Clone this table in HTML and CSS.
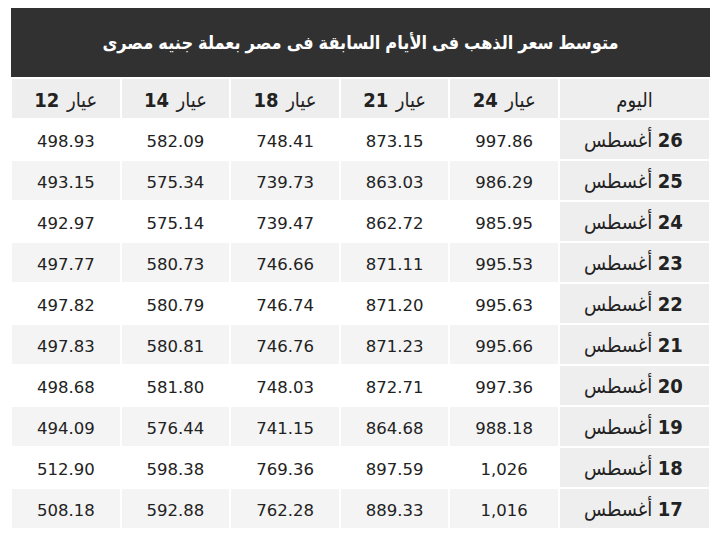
FILE: index.html
```html
<!DOCTYPE html>
<html lang="ar">
<head>
<meta charset="utf-8">
<link rel="stylesheet" href="styles.css">
</head>
<body>
<div class="wrap" dir="rtl">
  <div class="title">متوسط سعر الذهب فى الأيام السابقة فى مصر بعملة جنيه مصرى</div>
  <table class="prices">
    <colgroup><col class="c-day"><col><col><col><col><col></colgroup>
    <thead>
      <tr><th class="day-h">اليوم</th><th>عيار <b>24</b></th><th>عيار <b>21</b></th><th>عيار <b>18</b></th><th>عيار <b>14</b></th><th>عيار <b>12</b></th></tr>
    </thead>
    <tbody>
      <tr><td class="day"><b>26</b> أغسطس</td><td>997.86</td><td>873.15</td><td>748.41</td><td>582.09</td><td>498.93</td></tr>
      <tr><td class="day"><b>25</b> أغسطس</td><td>986.29</td><td>863.03</td><td>739.73</td><td>575.34</td><td>493.15</td></tr>
      <tr><td class="day"><b>24</b> أغسطس</td><td>985.95</td><td>862.72</td><td>739.47</td><td>575.14</td><td>492.97</td></tr>
      <tr><td class="day"><b>23</b> أغسطس</td><td>995.53</td><td>871.11</td><td>746.66</td><td>580.73</td><td>497.77</td></tr>
      <tr><td class="day"><b>22</b> أغسطس</td><td>995.63</td><td>871.20</td><td>746.74</td><td>580.79</td><td>497.82</td></tr>
      <tr><td class="day"><b>21</b> أغسطس</td><td>995.66</td><td>871.23</td><td>746.76</td><td>580.81</td><td>497.83</td></tr>
      <tr><td class="day"><b>20</b> أغسطس</td><td>997.36</td><td>872.71</td><td>748.03</td><td>581.80</td><td>498.68</td></tr>
      <tr><td class="day"><b>19</b> أغسطس</td><td>988.18</td><td>864.68</td><td>741.15</td><td>576.44</td><td>494.09</td></tr>
      <tr><td class="day"><b>18</b> أغسطس</td><td>1,026</td><td>897.59</td><td>769.36</td><td>598.38</td><td>512.90</td></tr>
      <tr><td class="day"><b>17</b> أغسطس</td><td>1,016</td><td>889.33</td><td>762.28</td><td>592.88</td><td>508.18</td></tr>
    </tbody>
  </table>
</div>
</body>
</html>
```

FILE: styles.css
```css
html, body {
  margin: 0;
  padding: 0;
  background: #fff;
}
.wrap {
  width: 699px;
  margin: 8px 0 0 11px;
}
.title {
  background: #313131;
  color: #fff;
  height: 69px;
  display: flex;
  align-items: center;
  justify-content: center;
  font-family: "Liberation Sans", "DejaVu Sans Condensed", "DejaVu Sans", sans-serif;
  font-weight: bold;
  font-size: 18px;
  margin-bottom: 1px;
}
.prices {
  width: 699px;
  border-collapse: separate;
  border-spacing: 0;
  table-layout: fixed;
}
.c-day {
  width: 151px;
}
.prices th,
.prices td {
  border: 1px solid #fff;
  height: 37px;
  padding: 2px 0 0;
  text-align: center;
  vertical-align: middle;
  color: #222;
}
.prices th {
  background: #eeeeee;
  font-family: "Liberation Sans", "DejaVu Sans Condensed", "DejaVu Sans", sans-serif;
  font-weight: normal;
  font-size: 20px;
}
.prices b {
  font-family: "DejaVu Sans Condensed", "DejaVu Sans", sans-serif;
  font-weight: bold;
  font-size: 20px;
  margin-right: 2px;
}
.prices td {
  font-family: "DejaVu Sans", sans-serif;
  font-size: 16.5px;
  background: #fff;
  padding-top: 4px;
  height: 35px;
}
.prices tbody tr:nth-child(even) td {
  background: #f4f4f4;
}
.prices td.day,
.prices tbody tr:nth-child(even) td.day {
  background: #eeeeee;
  font-family: "Liberation Sans", "DejaVu Sans Condensed", "DejaVu Sans", sans-serif;
  font-size: 20px;
  padding-top: 1px;
  height: 38px;
}
```
